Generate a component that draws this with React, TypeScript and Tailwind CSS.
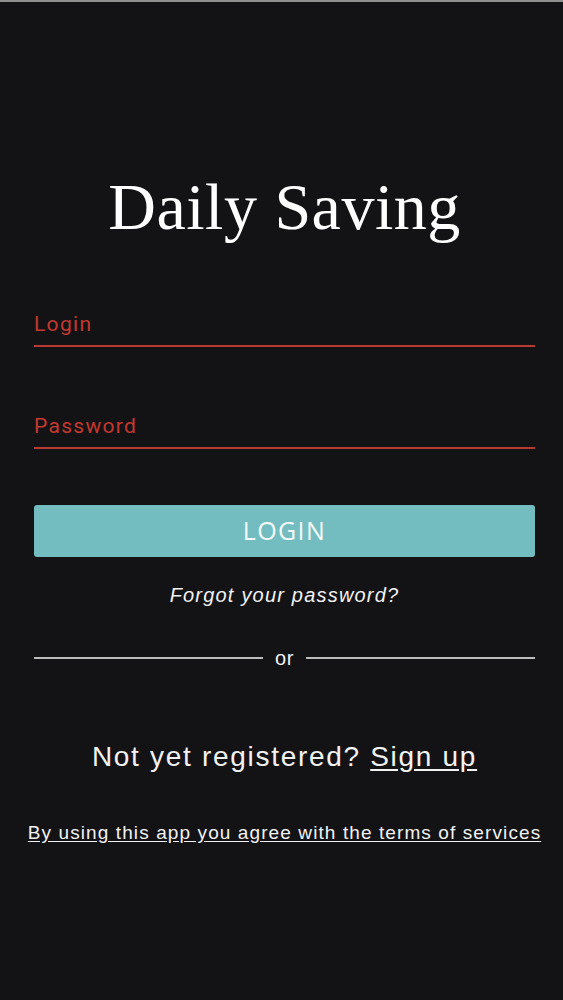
export default function App() {
  return (
    <div className="min-h-screen bg-[#131215] font-['Liberation_Sans',Arial,sans-serif] text-[#f2f2f2]">
      <div className="h-[2px] bg-[#8f8f8f]" />
      <div className="flex flex-col pt-[172px] pr-[28px] pl-[34px]">
        <h1 className="text-center font-['Liberation_Serif','Times_New_Roman',serif] text-[66px] leading-[66px] font-normal tracking-[0.5px] text-white">
          Daily Saving
        </h1>

        <div className="mt-[72px]">
          <label className="block font-['Roboto',sans-serif] text-[21px] leading-[24px] tracking-[1.3px] text-[#c4392f]">Login</label>
          <div className="mt-[9px] h-[2px] bg-[#b83a30]" />
        </div>

        <div className="mt-[67px]">
          <label className="block font-['Roboto',sans-serif] text-[21px] leading-[24px] tracking-[1.3px] text-[#c4392f]">Password</label>
          <div className="mt-[9px] h-[2px] bg-[#b83a30]" />
        </div>

        <button className="mt-[56px] flex h-[52px] items-center justify-center rounded-[3px] bg-[#73bdc1] font-['Open_Sans',sans-serif] text-[25px] tracking-[1.4px] text-[#f4f8f8]">
          LOGIN
        </button>

        <p className="mt-[26px] text-center text-[20px] leading-[24px] italic tracking-[1.2px]">Forgot your password?</p>

        <div className="mt-[39px] flex items-center gap-3">
          <div className="h-[2px] flex-1 bg-[#bdbdbd]" />
          <span className="text-[20px] leading-[24px] tracking-[0.5px]">or</span>
          <div className="h-[2px] flex-1 bg-[#bdbdbd]" />
        </div>

        <p className="mt-[71px] text-center text-[28px] leading-[32px] tracking-[1.7px] whitespace-nowrap">
          Not yet registered? <a className="underline underline-offset-[3px]">Sign up</a>
        </p>

        <div className="mt-[48px] flex justify-center">
          <a className="whitespace-nowrap text-[19px] leading-[24px] tracking-[1.1px] underline underline-offset-[2px]">
            By using this app you agree with the terms of services
          </a>
        </div>
      </div>
    </div>
  )
}
